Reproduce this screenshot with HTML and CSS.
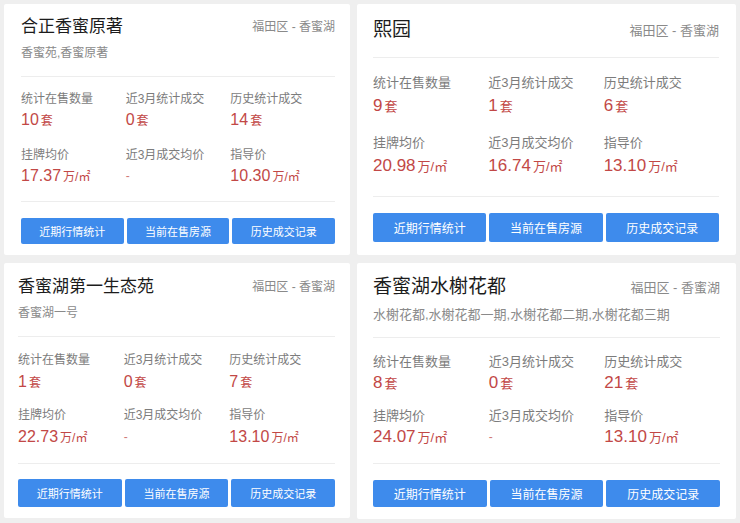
FILE: index.html
```html
<!DOCTYPE html>
<html lang="zh-CN">
<head>
<meta charset="utf-8">
<title>楼盘统计</title>
<link rel="stylesheet" href="styles.css">
</head>
<body>
<div class="page">

  <div class="card narrow c1">
    <div class="head"><h2 class="title">合正香蜜原著</h2><span class="loc">福田区 - 香蜜湖</span></div>
    <p class="sub">香蜜苑,香蜜原著</p>
    <div class="rule r1"></div>
    <div class="stats">
      <div class="stat"><div class="label">统计在售数量</div><div class="val">10<span class="unit">套</span></div></div>
      <div class="stat"><div class="label">近3月统计成交</div><div class="val">0<span class="unit">套</span></div></div>
      <div class="stat"><div class="label">历史统计成交</div><div class="val">14<span class="unit">套</span></div></div>
      <div class="stat"><div class="label">挂牌均价</div><div class="val">17.37<span class="unit">万/㎡</span></div></div>
      <div class="stat"><div class="label">近3月成交均价</div><div class="val"><span class="dash">-</span></div></div>
      <div class="stat"><div class="label">指导价</div><div class="val">10.30<span class="unit">万/㎡</span></div></div>
    </div>
    <div class="rule r2"></div>
    <div class="btns"><button class="btn">近期行情统计</button><button class="btn">当前在售房源</button><button class="btn">历史成交记录</button></div>
  </div>

  <div class="card wide c2">
    <div class="head"><h2 class="title">熙园</h2><span class="loc">福田区 - 香蜜湖</span></div>
    <div class="rule r1"></div>
    <div class="stats">
      <div class="stat"><div class="label">统计在售数量</div><div class="val">9<span class="unit">套</span></div></div>
      <div class="stat"><div class="label">近3月统计成交</div><div class="val">1<span class="unit">套</span></div></div>
      <div class="stat"><div class="label">历史统计成交</div><div class="val">6<span class="unit">套</span></div></div>
      <div class="stat"><div class="label">挂牌均价</div><div class="val">20.98<span class="unit">万/㎡</span></div></div>
      <div class="stat"><div class="label">近3月成交均价</div><div class="val">16.74<span class="unit">万/㎡</span></div></div>
      <div class="stat"><div class="label">指导价</div><div class="val">13.10<span class="unit">万/㎡</span></div></div>
    </div>
    <div class="rule r2"></div>
    <div class="btns"><button class="btn">近期行情统计</button><button class="btn">当前在售房源</button><button class="btn">历史成交记录</button></div>
  </div>

  <div class="card narrow c3">
    <div class="head"><h2 class="title">香蜜湖第一生态苑</h2><span class="loc">福田区 - 香蜜湖</span></div>
    <p class="sub">香蜜湖一号</p>
    <div class="rule r1"></div>
    <div class="stats">
      <div class="stat"><div class="label">统计在售数量</div><div class="val">1<span class="unit">套</span></div></div>
      <div class="stat"><div class="label">近3月统计成交</div><div class="val">0<span class="unit">套</span></div></div>
      <div class="stat"><div class="label">历史统计成交</div><div class="val">7<span class="unit">套</span></div></div>
      <div class="stat"><div class="label">挂牌均价</div><div class="val">22.73<span class="unit">万/㎡</span></div></div>
      <div class="stat"><div class="label">近3月成交均价</div><div class="val"><span class="dash">-</span></div></div>
      <div class="stat"><div class="label">指导价</div><div class="val">13.10<span class="unit">万/㎡</span></div></div>
    </div>
    <div class="rule r2"></div>
    <div class="btns"><button class="btn">近期行情统计</button><button class="btn">当前在售房源</button><button class="btn">历史成交记录</button></div>
  </div>

  <div class="card wide c4">
    <div class="head"><h2 class="title">香蜜湖水榭花都</h2><span class="loc">福田区 - 香蜜湖</span></div>
    <p class="sub">水榭花都,水榭花都一期,水榭花都二期,水榭花都三期</p>
    <div class="rule r1"></div>
    <div class="stats">
      <div class="stat"><div class="label">统计在售数量</div><div class="val">8<span class="unit">套</span></div></div>
      <div class="stat"><div class="label">近3月统计成交</div><div class="val">0<span class="unit">套</span></div></div>
      <div class="stat"><div class="label">历史统计成交</div><div class="val">21<span class="unit">套</span></div></div>
      <div class="stat"><div class="label">挂牌均价</div><div class="val">24.07<span class="unit">万/㎡</span></div></div>
      <div class="stat"><div class="label">近3月成交均价</div><div class="val"><span class="dash">-</span></div></div>
      <div class="stat"><div class="label">指导价</div><div class="val">13.10<span class="unit">万/㎡</span></div></div>
    </div>
    <div class="rule r2"></div>
    <div class="btns"><button class="btn">近期行情统计</button><button class="btn">当前在售房源</button><button class="btn">历史成交记录</button></div>
  </div>

</div>
</body>
</html>
```
FILE: styles.css
```css
* { box-sizing: border-box; }

html, body {
  margin: 0;
  padding: 0;
  background: #efefef;
  font-family: "Liberation Sans", "Noto Sans CJK SC", sans-serif;
}

.page {
  display: grid;
  grid-template-columns: 346px 379px;
  column-gap: 7px;
  row-gap: 8px;
  padding: 4px 0 0 4px;
  align-items: start;
}

.card {
  background: #fff;
  display: flex;
  flex-direction: column;
  border-radius: 2px;
}

/* ---- sizes per column ---- */
.narrow {
  --title-fs: 17px; --title-lh: 24px;
  --small-fs: 12px; --small-lh: 18px;
  --val-fs: 16px; --val-lh: 22px;
  --unit-fs: 12px;
  --btn-fs: 11px;
}
.wide {
  --title-fs: 19px; --title-lh: 26px;
  --small-fs: 13px; --small-lh: 19px;
  --val-fs: 17px; --val-lh: 24px;
  --unit-fs: 13px;
  --btn-fs: 12px;
}

/* ---- spacing per card ---- */
.c1 { padding: 11px 15px 11px 17px; --sub-gap: 5px; --r1-gap: 14px; --st-gap: 13px; --lv-gap: 1px; --row-gap: 15px; --r2-gap: 14px; --btn-gap: 16px; --btn-h: 26px; }
.c2 { padding: 13px 17px 13px 16px; --sub-gap: 5px; --r1-gap: 14px; --st-gap: 15px; --lv-gap: 2px; --row-gap: 15px; --r2-gap: 18px; --btn-gap: 16px; --btn-h: 29px; }
.c3 { padding: 12px 15px 11px 14px; --sub-gap: 5px; --r1-gap: 14px; --st-gap: 14px; --lv-gap: 2px; --row-gap: 13px; --r2-gap: 15px; --btn-gap: 15px; --btn-h: 28px; }
.c4 { padding: 11px 16px 12px 16px; --sub-gap: 5px; --r1-gap: 13px; --st-gap: 14px; --lv-gap: 0px; --row-gap: 11px; --r2-gap: 14px; --btn-gap: 16px; --btn-h: 27px; }

.head {
  display: flex;
  justify-content: space-between;
  align-items: center;
  height: var(--title-lh);
}

.title {
  margin: 0;
  font-size: var(--title-fs);
  line-height: var(--title-lh);
  font-weight: 400;
  color: #1c1c1c;
  white-space: nowrap;
}

.loc {
  font-size: var(--small-fs);
  line-height: var(--small-lh);
  color: #8a8a8a;
  white-space: nowrap;
}

.sub {
  margin: var(--sub-gap) 0 0;
  font-size: var(--small-fs);
  line-height: var(--small-lh);
  color: #8a8a8a;
  white-space: nowrap;
}

.rule {
  height: 1px;
  background: #ededed;
}
.r1 { margin-top: var(--r1-gap); }
.r2 { margin-top: var(--r2-gap); }

.stats {
  margin-top: var(--st-gap);
  display: grid;
  grid-template-columns: repeat(3, 1fr);
  row-gap: var(--row-gap);
}

.label {
  font-size: var(--small-fs);
  line-height: var(--small-lh);
  color: #7c7c7c;
  white-space: nowrap;
}

.val {
  margin-top: var(--lv-gap);
  font-size: var(--val-fs);
  line-height: var(--val-lh);
  height: var(--val-lh);
  color: #c24846;
  white-space: nowrap;
}

.unit {
  font-size: var(--unit-fs);
  margin-left: 2px;
}

.dash {
  font-size: 12px;
  color: #d07a78;
  vertical-align: 3px;
}

.btns {
  margin-top: var(--btn-gap);
  display: grid;
  grid-template-columns: repeat(3, 1fr);
  column-gap: 3px;
}

.btn {
  height: var(--btn-h);
  border: 0;
  border-radius: 2px;
  background: #3e8bec;
  color: #fff;
  font-family: "Liberation Sans", "Noto Sans CJK SC", sans-serif;
  font-size: var(--btn-fs);
  padding: 0;
  white-space: nowrap;
}
```
